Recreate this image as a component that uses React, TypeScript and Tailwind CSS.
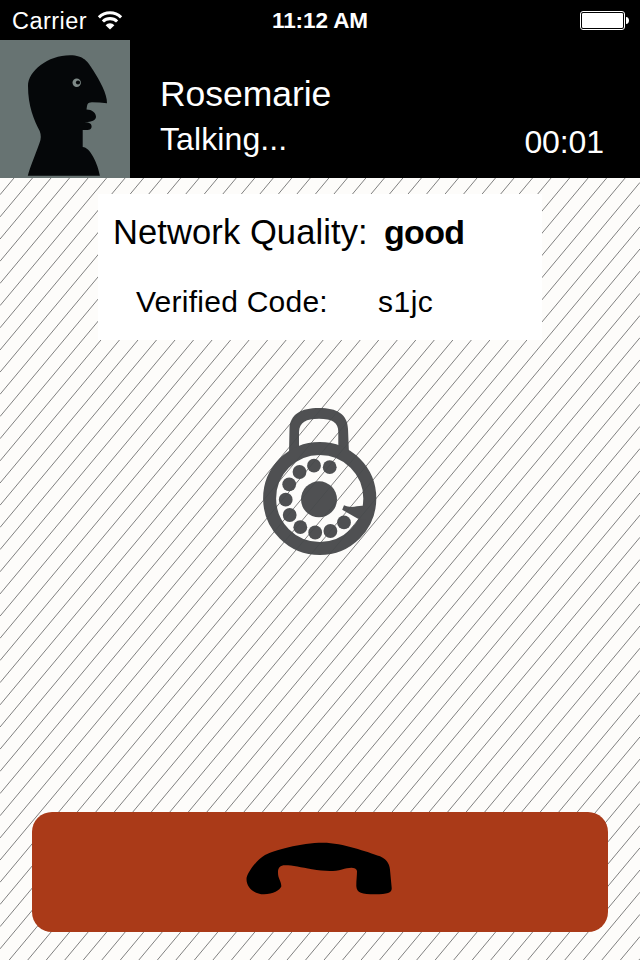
const lines = Array.from({ length: 78 }, (_, i) => 17.3 + i * 22.18);

function Hatching() {
  return (
    <svg className="absolute inset-0 h-full w-full" viewBox="0 178 640 782" aria-hidden="true">
      {lines.map((y) => (
        <line key={y} x1={0} y1={y} x2={640} y2={y - 640 * 1.1976} stroke="#808080" strokeWidth={1} />
      ))}
    </svg>
  );
}

function Wifi() {
  return (
    <svg className="ml-[10.5px] h-[19px] w-[26px]" viewBox="0 0 26 19" fill="none" stroke="#fff" strokeWidth={3.1}>
      <path d="M1.9 6.3A16 16 0 0 1 24.1 6.3" />
      <path d="M5.9 10.5A10.2 10.2 0 0 1 20.1 10.5" />
      <path d="M13 18.6L8.6 14.2A6.2 6.2 0 0 1 17.4 14.2Z" fill="#fff" stroke="none" />
    </svg>
  );
}

function Battery() {
  return (
    <svg className="mt-0.5 h-5 w-[50px]" viewBox="0 0 50 20">
      <rect x=".5" y=".5" width="44" height="18" rx="2.5" fill="none" stroke="#fff" />
      <rect x="2" y="2" width="41" height="15" rx="1.2" fill="#fff" />
      <path d="M46 6c4 0 4 7 0 7Z" fill="#fff" />
    </svg>
  );
}

function Avatar() {
  return (
    <svg className="h-[138px] w-[130px] shrink-0 bg-[#677372]" viewBox="0 0 130 138">
      <path
        fill="#050709"
        d="M27.8 135.8C30 127 35 116 39.5 103Q42 97 39.7 91C34 80 28 66 28 46C28 31 48 15.3 70 15.3C84 15.3 88 22 93 30C100 41 107.2 54 107 63.2C102 62.8 97 62.2 92 62.2C87 62.5 87.3 64 86.5 69.5C92 69.5 96 73 96 76.8C96 80.5 91 82.2 84.5 82C90 82.5 91.6 84 91.6 86.5C91.6 90 88 90.2 82.7 90V107C90 107 98 124 99.9 135.8Z"
      />
      <circle cx="76.7" cy="42.7" r="4.2" fill="#7f8a88" />
      <circle cx="78" cy="42.5" r="2.1" fill="#050709" />
    </svg>
  );
}

const holes = [
  [79.7, 67.2], [64, 65.7], [49.5, 72], [39.2, 84.3], [35.7, 99.7],
  [39.7, 115], [50.3, 127.2], [65.2, 132.5], [80.4, 131], [94, 122.4],
];

function Lock() {
  return (
    <svg className="h-[165px] w-[140px]" viewBox="0 0 140 165" opacity={0.96}>
      <path
        fill="#484a4c"
        fillRule="evenodd"
        d="M39 54L39.5 29C40 14 51 8 69 8S97.5 14 98 29L99 54H88.3V32C88.3 22 82 18.7 69 18.7S49.5 22 49 32V54Z"
      />
      <ellipse cx="69.7" cy="98.5" rx="50.1" ry="50" fill="none" stroke="#484a4c" strokeWidth={13} />
      <circle cx="69" cy="99.3" r="18" fill="#484a4c" />
      {holes.map(([x, y]) => (
        <circle key={`${x}-${y}`} cx={x} cy={y} r={6.9} fill="#484a4c" />
      ))}
      <path fill="#484a4c" d="M94 105.2L92.2 109.8L107.5 118.6L116 120V106.5C109 104 103 109.5 94 105.2Z" />
    </svg>
  );
}

function Handset() {
  return (
    <svg className="h-[75px] w-[170px]" viewBox="0 0 170 75">
      <path d="M11.5 49C11.5 44 21 30 30 25C38 20.5 66 12.7 88 12.7C108 12.7 132 22 145 26.2C153 30 155 35 155.2 42L156.7 58C157 62.5 153 64.3 140 64.3C127 64.3 121.5 63 121.3 56C121.3 50 122 46 122 41C121 36.5 114 37.3 107 39.5C98 42 88 41 77 39.3C66 37.5 58 35.3 50 35.3C45 35.3 42.7 38 43 43C43 49 46.5 51 46.3 56.5C45 60 38 64.3 29 64.3C18 64 11.5 57 11.5 49Z" />
    </svg>
  );
}

export default function App() {
  return (
    <div className="flex h-[960px] w-[640px] flex-col overflow-hidden bg-[#fdfcfa] font-['Liberation_Sans',Arial,sans-serif]">
      <header className="h-[178px] bg-black text-white">
        <div className="grid h-10 grid-cols-3 items-center">
          <div className="flex items-center pl-3">
            <span className="mt-0.5 text-[23.5px] leading-6 tracking-[.45px]">Carrier</span>
            <Wifi />
          </div>
          <span className="mt-0.5 text-center text-[22.5px] leading-6 font-bold tracking-[-.1px]">11:12 AM</span>
          <div className="flex justify-end pr-[10px]"><Battery /></div>
        </div>
        <div className="flex h-[138px]">
          <Avatar />
          <div className="flex grow flex-col pt-[34px] pl-[30px]">
            <span className="text-[35.5px] leading-10 tracking-[-.05px]">Rosemarie</span>
            <span className="mt-[5px] text-[32px] leading-10 tracking-[.1px]">Talking...</span>
          </div>
          <span className="mt-[82px] mr-[36px] text-[32px] leading-10 tracking-[-.1px]">00:01</span>
        </div>
      </header>
      <main className="relative flex grow flex-col">
        <Hatching />
        <div className="relative flex grow flex-col items-center pt-4">
          <section className="h-[146px] w-[444px] bg-white text-black">
            <div className="flex items-center pt-[18px] pl-[15px] leading-10">
              <span className="w-[271px] text-[34.5px] tracking-[.1px] whitespace-nowrap">Network Quality:</span>
              <strong className="text-[34px] tracking-[-.7px]">good</strong>
            </div>
            <div className="flex items-center pt-[30px] pl-[38px] leading-10">
              <span className="w-[242px] text-[30px] tracking-[.25px] whitespace-nowrap">Verified Code:</span>
              <span className="text-[30px] tracking-[.5px]">s1jc</span>
            </div>
          </section>
          <div className="mt-[60px]"><Lock /></div>
          <button className="mt-auto mb-7 flex h-[120px] w-[576px] items-start justify-center rounded-[20px] bg-[#aa3a18] pt-[18px]" aria-label="End call">
            <Handset />
          </button>
        </div>
      </main>
    </div>
  );
}
